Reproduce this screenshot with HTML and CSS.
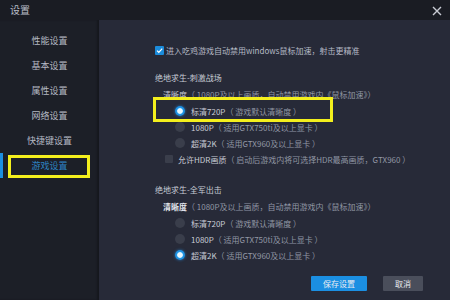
FILE: index.html
```html
<!DOCTYPE html>
<html lang="zh-CN">
<head>
<meta charset="utf-8">
<link rel="stylesheet" href="styles.css">
</head>
<body>
<div class="app">
  <div class="titlebar">
    <span class="title">设置</span>
    <svg class="close" width="10" height="10" viewBox="0 0 10 10"><path d="M1 1L9 9M9 1L1 9" stroke="#c9ccd4" stroke-width="1.4" fill="none"/></svg>
  </div>
  <div class="main">
    <nav class="sidebar">
      <div class="nav-item">性能设置</div>
      <div class="nav-item">基本设置</div>
      <div class="nav-item">属性设置</div>
      <div class="nav-item">网络设置</div>
      <div class="nav-item">快捷键设置</div>
      <div class="nav-item active">游戏设置</div>
      <div class="mark mark-nav"></div>
    </nav>
    <section class="content">
      <div class="row check-row">
        <span class="checkbox on"><svg width="9" height="9" viewBox="0 0 9 9"><path d="M2 4.6L3.8 6.3L7.2 2.6" stroke="#fff" stroke-width="1.2" fill="none"/></svg></span>
        <span>进入吃鸡游戏自动禁用windows鼠标加速，射击更精准</span>
      </div>

      <div class="group g1">
        <div class="row heading">绝地求生-刺激战场</div>
        <div class="row clarity"><span class="label">清晰度</span><span class="hint">（ 1080P及以上画质，自动禁用游戏内《鼠标加速》）</span></div>
        <div class="radios">
          <div class="row radio-row"><span class="radio on"></span><span class="opt">标清720P</span><span class="hint">（ 游戏默认清晰度 ）</span></div>
          <div class="row radio-row"><span class="radio"></span><span class="opt">1080P</span><span class="hint">（ 适用GTX750ti及以上显卡 ）</span></div>
          <div class="row radio-row"><span class="radio"></span><span class="opt">超清2K</span><span class="hint">（ 适用GTX960及以上显卡 ）</span></div>
          <div class="row hdr-row"><span class="checkbox"></span><span class="opt">允许HDR画质</span><span class="hint">（ 启动后游戏内将可选择HDR最高画质，GTX960 ）</span></div>
        </div>
      </div>

      <div class="group g2">
        <div class="row heading">绝地求生-全军出击</div>
        <div class="row clarity"><span class="label bright">清晰度</span><span class="hint">（ 1080P及以上画质，自动禁用游戏内《鼠标加速》）</span></div>
        <div class="radios">
          <div class="row radio-row"><span class="radio"></span><span class="opt">标清720P</span><span class="hint">（ 游戏默认清晰度 ）</span></div>
          <div class="row radio-row"><span class="radio"></span><span class="opt">1080P</span><span class="hint">（ 适用GTX750ti及以上显卡 ）</span></div>
          <div class="row radio-row"><span class="radio on"></span><span class="opt">超清2K</span><span class="hint">（ 适用GTX960及以上显卡 ）</span></div>
        </div>
      </div>

      <div class="actions">
        <button class="btn primary">保存设置</button>
        <button class="btn">取消</button>
      </div>

      <div class="mark mark-radio"></div>
    </section>
  </div>
</div>
</body>
</html>
```

FILE: styles.css
```css
* { box-sizing: border-box; }
html, body { margin: 0; padding: 0; }
body {
  width: 450px;
  height: 300px;
  overflow: hidden;
  background: #1b1d25;
  font-family: "Noto Sans CJK SC", "Noto Sans", sans-serif;
  color: #b6bac6;
}
.app { display: flex; flex-direction: column; height: 300px; }
.titlebar {
  height: 20px;
  background: #1a1c23;
  display: flex;
  align-items: center;
  justify-content: space-between;
  padding: 0 8px 0 10px;
  flex: none;
}
.title { font-size: 10px; color: #b9bdc7; line-height: 20px; }
.close { display: block; margin-top: 1px; }
.main { flex: 1; display: flex; min-height: 0; }
.sidebar {
  width: 99px;
  flex: none;
  background: #1c1f27;
  padding-top: 8px;
  position: relative;
  box-shadow: inset -2px 0 2px rgba(0,0,0,0.25);
}
.nav-item {
  height: 25px;
  line-height: 25px;
  text-align: center;
  font-size: 9px;
  color: #b4b8c3;
  position: relative;
}
.nav-item.active { color: #2d83c4; }
.nav-item.active::before {
  content: "";
  position: absolute;
  left: 0; top: 0; bottom: 0;
  width: 3px;
  background: #1d8fe0;
}
.content {
  flex: 1;
  background: #272a38;
  position: relative;
  padding: 22px 27px 0 56px;
  font-size: 8px;
}
.row {
  height: 16px;
  display: flex;
  align-items: center;
  white-space: nowrap;
}
.check-row { gap: 1px; }
.checkbox {
  width: 9px; height: 9px;
  background: #3a3e4b;
  border-radius: 1px;
  margin-right: 1px;
  flex: none;
  display: flex;
}
.checkbox.on { background: #1b8cdc; }
.check-row .checkbox { margin-right: 1px; }
.check-row span:last-child { margin-left: 0; }
.group.g1 { margin-top: 11px; }
.group.g2 { margin-top: 14px; }
.heading { color: #c6cad4; font-size: 8px; }
.clarity { padding-left: 8px; margin-top: 1px; }
.label { color: #c4c8d2; }
.label.bright { color: #e4e7ee; font-weight: bold; }
.hint { color: #9197a4; }
.radios { margin-top: 1px; }
.radio-row { padding-left: 20px; }
.radio {
  width: 10px; height: 10px;
  border-radius: 50%;
  background: #3a3e4b;
  margin-right: 6px;
  flex: none;
}
.radio.on {
  background: radial-gradient(circle, #e8f7ff 0 2.4px, #6cc4f6 2.9px, #1d8fe0 3.6px);
  box-shadow: 0 0 3px rgba(40,150,240,0.7);
}
.opt { color: #c8ccd6; }
.hdr-row { padding-left: 10px; }
.hdr-row .checkbox { width: 8px; height: 8px; margin-right: 5px; }
.actions {
  margin-top: 13px;
  display: flex;
  justify-content: flex-end;
  gap: 16px;
}
.btn {
  font-family: inherit;
  font-size: 8px;
  height: 15px;
  border: none;
  border-radius: 1px;
  padding: 0;
  color: #e8ecf2;
  background: #4a4e5b;
  width: 40px;
  line-height: 15px;
}
.btn.primary { background: #1b8fe2; width: 56px; }
.mark {
  position: absolute;
  border: 3px solid #f3ef1d;
  pointer-events: none;
}
.mark-nav { left: 8px; top: 135px; width: 82px; height: 23px; }
.mark-radio { left: 54px; top: 77px; width: 180px; height: 25px; }
```
